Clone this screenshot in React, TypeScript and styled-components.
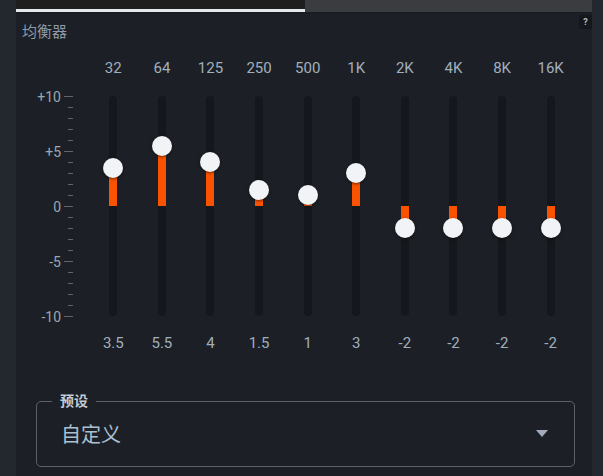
import React from 'react'
import styled, { createGlobalStyle } from 'styled-components'

const GlobalStyle = createGlobalStyle`
    html, body {
        margin: 0;
        padding: 0;
        background: #22282d;
    }
    body {
        font-family: Roboto, "Noto Sans CJK SC", sans-serif;
    }
`

const STEP = 11
const TRACK_H = 220

const Page = styled.div`
    display: flex;
    height: 476px;
    padding-left: 16px;
    background: #22282d;
    overflow: hidden;
`

const Panel = styled.div`
    width: 576px;
    display: flex;
    flex-direction: column;
    background: #1c2026;
`

const TabBar = styled.div`
    display: grid;
    grid-template-columns: 289px 1fr;
    height: 12px;
    border-bottom: 2px solid #191c20;
`

const Tab = styled.div<{ $active?: boolean }>`
    background: ${p => (p.$active ? '#1e1e1f' : '#3a3c3f')};
    border-bottom: ${p => (p.$active ? '3px solid #e6e8f0' : 'none')};
`

const Header = styled.div`
    display: flex;
    justify-content: space-between;
    align-items: flex-start;
    height: 36px;
    padding: 1px 0 0 6px;
    box-sizing: border-box;
`

const Title = styled.div`
    margin-top: 7px;
    font-size: 15px;
    line-height: 20px;
    color: #8d99a6;
`

const Help = styled.div`
    width: 13px;
    height: 14px;
    background: #14171b;
    color: #b8bcc2;
    font-size: 9px;
    font-weight: 700;
    line-height: 14px;
    text-align: center;
`

const Eq = styled.div`
    display: grid;
    grid-template-columns: 73px repeat(10, 48.6px);
    padding-top: 8px;
`

const Axis = styled.div`
    display: flex;
    flex-direction: column;
    justify-content: space-between;
    height: ${TRACK_H + 1}px;
    margin-top: 38px;
`

const TickRow = styled.div`
    display: flex;
    justify-content: flex-end;
    align-items: center;
    gap: 3px;
    height: 1px;
    padding-right: 16px;
`

const TickLabel = styled.span`
    font-size: 14px;
    line-height: 16px;
    color: #9aa6b2;
`

const Tick = styled.div<{ $major?: boolean }>`
    width: ${p => (p.$major ? 9 : 5)}px;
    height: 1px;
    background: #5d6772;
`

const Band = styled.div`
    display: flex;
    flex-direction: column;
    align-items: center;
`

const Label = styled.div`
    height: 20px;
    font-size: 15px;
    line-height: 20px;
    color: #a1afbd;
`

const Track = styled.div`
    position: relative;
    width: 8px;
    height: ${TRACK_H}px;
    margin: 18px 0 17px;
    border-radius: 4px;
    background: #14171b;
`

const Fill = styled.div`
    position: absolute;
    left: 0;
    width: 8px;
    background: #fa5300;
`

const Thumb = styled.div`
    position: absolute;
    left: -6px;
    width: 20px;
    height: 20px;
    border-radius: 50%;
    background: #f1f3f7;
    box-shadow: 0 1px 3px rgba(0, 0, 0, 0.55);
`

const Preset = styled.fieldset`
    margin: 40px 17px 0 20px;
    padding: 0;
    border: 1px solid #5b6169;
    border-radius: 5px;
    min-width: 0;
`

const Legend = styled.legend`
    margin-left: 15px;
    padding: 0 8px;
    font-size: 14px;
    font-weight: 700;
    line-height: 16px;
    color: #c3cbd4;
`

const Select = styled.div`
    display: flex;
    justify-content: space-between;
    align-items: center;
    height: 48px;
    margin-bottom: 9px;
    padding: 0 26px 0 24px;
`

const Value = styled.span`
    font-size: 20px;
    color: #aac0d2;
`

const Caret = styled.div`
    width: 0;
    height: 0;
    border-left: 6px solid transparent;
    border-right: 6px solid transparent;
    border-top: 7px solid #a2abba;
`

const bands = [
    { f: '32', v: 3.5 },
    { f: '64', v: 5.5 },
    { f: '125', v: 4 },
    { f: '250', v: 1.5 },
    { f: '500', v: 1 },
    { f: '1K', v: 3 },
    { f: '2K', v: -2 },
    { f: '4K', v: -2 },
    { f: '8K', v: -2 },
    { f: '16K', v: -2 },
]

const ticks = Array.from({ length: 21 }, (_, i) => 10 - i)

const tickText = (t: number) => (t > 0 ? `+${t}` : `${t}`)

export default function App() {
    const zero = TRACK_H / 2
    return (
        <Page>
            <GlobalStyle />
            <Panel>
                <TabBar>
                    <Tab $active />
                    <Tab />
                </TabBar>
                <Header>
                    <Title>均衡器</Title>
                    <Help>?</Help>
                </Header>
                <Eq>
                    <Axis>
                        {ticks.map(t => (
                            <TickRow key={t}>
                                {t % 5 === 0 && <TickLabel>{tickText(t)}</TickLabel>}
                                <Tick $major={t % 5 === 0} />
                            </TickRow>
                        ))}
                    </Axis>
                    {bands.map(b => {
                        const y = zero - b.v * STEP
                        return (
                            <Band key={b.f}>
                                <Label>{b.f}</Label>
                                <Track>
                                    <Fill style={{ top: Math.min(y, zero), height: Math.abs(b.v * STEP) }} />
                                    <Thumb style={{ top: y - 10 }} />
                                </Track>
                                <Label>{b.v}</Label>
                            </Band>
                        )
                    })}
                </Eq>
                <Preset>
                    <Legend>预设</Legend>
                    <Select>
                        <Value>自定义</Value>
                        <Caret />
                    </Select>
                </Preset>
            </Panel>
        </Page>
    )
}
